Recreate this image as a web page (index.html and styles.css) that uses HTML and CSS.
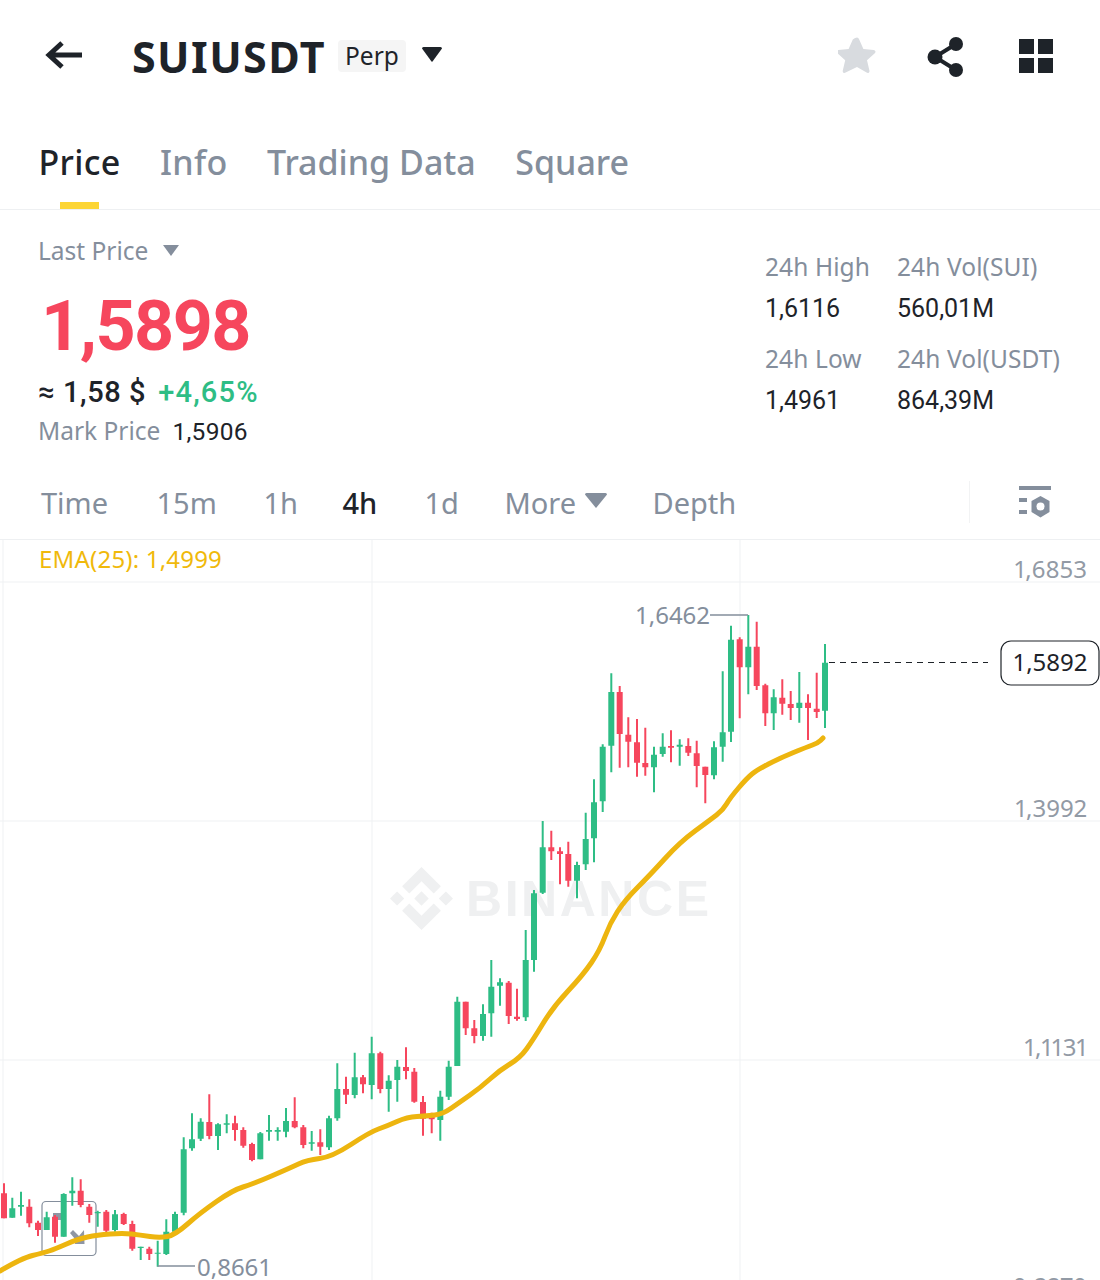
FILE: index.html
```html
<!DOCTYPE html>
<html lang="en">
<head>
<meta charset="utf-8">
<title>SUIUSDT Perp</title>
<link rel="stylesheet" href="styles.css">
</head>
<body>
<div class="page">
  <header class="topbar">
    <svg class="back" viewBox="0 0 38 30"><path d="M37 15H5M17 3 4 15l13 12" fill="none" stroke="#1e2329" stroke-width="5"/></svg>
    <h1 class="symbol">SUIUSDT</h1>
    <span class="perp">Perp</span>
    <svg class="caret-top" viewBox="0 0 20 15"><path d="M0 1.500Q0 0 1.500 0h17Q20 0 20 1.500L10.500 14.500Q10 15 9.500 14.500Z" fill="#1e2329"/></svg>
    <div class="top-actions">
      <svg class="star" viewBox="0 0 38 38"><path d="M19 1.500c1 0 1.700.8 2.200 1.900l4.200 9.600 10.200 1c2 .3 2.500 2 1.200 3.300l-7.800 7 2.400 10.300c.4 1.900-1.200 2.900-2.800 2L19 31l-11.400 5.600c-1.600.9-3.200-.1-2.800-2l2.400-10.300-7.800-7C-1.900 16-1.200 14.300.4 14l10.200-1 4.200-9.600C16.300 2.300 18 1.500 19 1.500Z" fill="#d8dbdf"/></svg>
      <svg class="share" viewBox="0 0 38 40"><path d="M29 7 8 20l21 13" fill="none" stroke="#1e2329" stroke-width="4"/><circle cx="29" cy="7" r="7" fill="#1e2329"/><circle cx="8" cy="20" r="7.500" fill="#1e2329"/><circle cx="29" cy="33" r="7" fill="#1e2329"/></svg>
      <svg class="grid-icon" viewBox="0 0 34 34"><path d="M0 0h15v15H0zM19 0h15v15H19zM0 19h15v15H0zM19 19h15v15H19z" fill="#1e2329"/></svg>
    </div>
  </header>

  <nav class="tabs">
    <a class="tab active">Price</a>
    <a class="tab tab-info">Info</a>
    <a class="tab">Trading Data</a>
    <a class="tab">Square</a>
  </nav>

  <section class="stats">
    <div class="last">
      <div class="last-label">Last Price<svg class="caret-small" viewBox="0 0 16 12"><path d="M0 0h16L8 11Z" fill="#848e9c"/></svg></div>
      <div class="last-value">1,5898</div>
      <div class="last-sub"><span class="approx">≈ 1,58 $</span><span class="change">+4,65%</span></div>
      <div class="mark"><span class="mark-label">Mark Price</span><span class="mark-value">1,5906</span></div>
    </div>
    <dl class="day-stats">
      <div class="stat"><dt>24h High</dt><dd>1,6116</dd></div>
      <div class="stat"><dt>24h Vol(SUI)</dt><dd>560,01M</dd></div>
      <div class="stat"><dt>24h Low</dt><dd>1,4961</dd></div>
      <div class="stat"><dt>24h Vol(USDT)</dt><dd>864,39M</dd></div>
    </dl>
  </section>

  <div class="intervals">
    <span class="int int-time">Time</span>
    <span class="int int-15">15m</span>
    <span class="int int-1h">1h</span>
    <span class="int int-4h">4h</span>
    <span class="int int-1d">1d</span>
    <span class="int int-more">More<svg class="caret-more" viewBox="0 0 22 15"><path d="M0 1.500Q0 0 1.500 0h19Q22 0 22 1.500L11.500 14.500Q11 15 10.500 14.500Z" fill="#848e9c"/></svg></span>
    <span class="int">Depth</span>
    <span class="int-sep"></span>
    <svg class="chart-settings" viewBox="0 0 32 32"><path d="M0 0h32v4H0zM0 12h8v4H0zM0 24h8v4H0z" fill="#848e9c"/><path d="M21.500 10l9 5v11l-9 5.500-9-5.500V15z" fill="#848e9c"/><circle cx="21.500" cy="20.500" r="4" fill="#fff"/></svg>
  </div>

  <div class="chart">
    <svg class="chart-svg" viewBox="0 540 1100 740">
      <g class="grid-lines">
        <path d="M3 540V1280M372 540V1280M740 540V1280M0 582H1100M0 821H1100M0 1060H1100"/>
      </g>
      <g class="watermark">
        <svg x="390" y="867" width="63" height="63" viewBox="0 0 126.610 126.610"><path d="M38.730 53.200l24.590-24.580 24.600 24.600 14.300-14.310L63.320 0 24.430 38.900l14.300 14.300zM0 63.310l14.300-14.310 14.310 14.310-14.310 14.300zM38.730 73.410l24.590 24.590 24.600-24.600 14.310 14.290-38.900 38.910-38.910-38.880-.02-.02zM98 63.310l14.300-14.310 14.310 14.300-14.310 14.320zM77.830 63.300L63.320 48.780 52.590 59.510l-1.240 1.230-2.540 2.540 14.510 14.500 14.510-14.470z"/></svg>
        <text x="466" y="916" class="wm-text" textLength="243">BINANCE</text>
      </g>
      <text class="ema-label" x="39" y="568">EMA(25): 1,4999</text>
      <g class="axis">
        <text x="1087" y="578">1,6853</text>
        <text x="1087" y="817">1,3992</text>
        <text x="1087" y="1056">1,1131</text>
        <text x="1087" y="1295">0,8270</text>
      </g>

      <rect class="mini-box" x="42" y="1201.500" width="54" height="54" rx="4"/>
      <path class="mini-icon" d="M53 1213h9v7h-4v5h-5zM70 1233l3-3 6 6 5-6 .5 14H75v-5z"/>

      <path class="up wick" d="M825 644V728M799.300 672V722.700M773.700 689.300V730M748.300 615V694.300M731 625.700V742M722.700 671.300V761.700M714 741.300V779.300M679.700 739.300V765.700M662.700 733.300V756.700M654 746.700V792.300M611.300 673.300V772.300M602.700 744.300V812M594 779.300V862.300M585.700 812.700V870M577 861.700V898.300M542.700 821V894M534 890V971.700M525.700 930V1021M500 978.300V1005.700M491.300 960V1036.700M483 1004.300V1040.700M457.300 996.700V1066M448.700 1060.700V1100M440.300 1090.700V1140.700M397.300 1060V1101.700M388.700 1075.300V1111.700M371.700 1036.700V1099.300M354.700 1052.700V1098.300M337.300 1063.300V1120.700M329 1115.700V1150M311.700 1131V1150.700M286 1108V1137.300M277.700 1127.300V1140.700M269 1115V1140.700M260.300 1132V1159.300M226.700 1114.300V1133.300M218 1123.300V1150M200.700 1118.300V1141M192 1113.300V1150.700M183.700 1137.300V1215.300M175 1211.700V1231.700M166.300 1219.300V1255M157.700 1240.700V1266.700M140.700 1246.700V1260M115 1210V1231.700M97.700 1210.700V1226.700M72.300 1177.300V1205.700M63.700 1193.300V1236.700M46.700 1211.700V1230M21 1191.700V1215.700M12.300 1197.700V1217.700"/>
      <path class="up body" d="M825 662.700V710.700M799.300 702.700V708M773.700 697.300V713.300M748.300 646.700V667.300M731 639.700V731.700M722.700 732.300V746.700M714 747.300V775.300M679.700 744.700V746.700M662.700 746.700V754M654 754.700V767.300M611.300 692V745.700M602.700 746.700V801.300M594 802.300V838.300M585.700 839V864.300M577 865V880.700M542.700 847.300V892.700M534 893.300V960M525.700 960V1017.300M500 982.300V985.700M491.300 986.700V1013.300M483 1014V1036M457.300 1001.700V1066M448.700 1066.700V1096.700M440.300 1096.700V1120M397.300 1066.700V1080M388.700 1080.700V1089M371.700 1053.300V1085M354.700 1077.300V1095M337.300 1089V1118.300M329 1118.300V1147.300M311.700 1142.300V1143.700M286 1121V1131.700M277.700 1130V1131.700M269 1130V1131.700M260.300 1133.300V1159.300M226.700 1123.300V1124.700M218 1124.300V1136M200.700 1121.700V1138.700M192 1139.300V1148.300M183.700 1149.300V1212.700M175 1214V1231.700M166.300 1231.700V1254M157.700 1252.700V1253.700M140.700 1246.700V1248M115 1214.300V1230M97.700 1212V1213.300M72.300 1190.700V1193.300M63.700 1194V1236.700M46.700 1217.300V1230M21 1205V1206.700M12.300 1208.300V1217.700"/>
      <path class="down wick" d="M816.700 672.700V718M808 694.300V740M790.700 691V720M782.300 679.300V714.700M765.300 683.700V726M756.700 621.700V690M739.700 637.300V718.300M705.300 766.700V803.300M696.700 740.700V787.300M688.300 738.300V756M671 730.300V762.300M645.300 727.700V775.700M637 719V776.700M628.300 717.300V767.300M619.700 686V767.700M568.300 841.700V886.700M560 847.300V884.300M551.300 830.700V860M517 988.700V1020.700M508.700 981V1024M474.300 1020V1043.300M465.700 1001.700V1035M431.700 1112.700V1133.300M423 1096V1135.700M414.300 1068V1102.700M406 1047.300V1079.300M380.300 1051.700V1093.300M363 1075V1093.300M346 1076.700V1104M320.300 1129.300V1155M303.300 1125V1148.300M294.700 1097.300V1128.300M252 1142.700V1161.300M243.300 1127.300V1147.700M235 1115.700V1140.700M209.300 1094.300V1139.300M149.300 1246.700V1260M132.300 1220.700V1250.700M123.700 1212.700V1225M106.300 1210V1232M89.300 1204V1222.700M80.700 1179.300V1207.300M55 1215V1242.700M38 1220.700V1236M29.300 1199.300V1227.300M4 1183.300V1218.300"/>
      <path class="down body" d="M816.700 708.700V712M808 702.700V708M790.700 704V708M782.300 697.700V703.700M765.300 685.300V713.300M756.700 646.700V686M739.700 639.300V667.300M705.300 766.700V775M696.700 753.300V766M688.300 746V752.700M671 746V747.700M645.300 763V767.300M637 742.300V762.700M628.300 734.700V741.700M619.700 692V734M568.300 854V880.700M560 851.300V854M551.300 847.300V851.300M517 1016.700V1019M508.700 982.700V1016M474.300 1028.300V1036M465.700 1001.700V1028.300M431.700 1115V1119.300M423 1102V1118.700M414.300 1071.700V1101.700M406 1067V1071M380.300 1053.300V1089M363 1077.300V1084.300M346 1089V1094.700M320.300 1142.300V1146.700M303.300 1127.300V1145M294.700 1121V1127.300M252 1144V1160M243.300 1130V1145.700M235 1123.300V1130M209.300 1122V1136M149.300 1248.700V1254M132.300 1224V1248.700M123.700 1214V1224M106.300 1211.700V1230.700M89.300 1206.700V1215M80.700 1190.700V1205M55 1216.700V1236.700M38 1222.700V1230M29.300 1206.700V1223.300M4 1193.300V1218.300"/>

      <path class="ema" d="M0 1271Q22 1258 32.500 1255.500Q43 1253 49 1251Q55 1249 66.500 1244Q78 1239 87.500 1237Q97 1235 110 1234Q123 1233 131.500 1234Q140 1235 150 1236.500Q160 1238 167.500 1236.500Q175 1235 187.500 1224Q200 1213 216.500 1201.500Q233 1190 243 1187Q253 1184 271.500 1176Q290 1168 298.500 1164Q307 1160 319.500 1158.500Q332 1157 351 1144.500Q370 1132 378.500 1129Q387 1126 397 1121.500Q407 1117 417 1116.500Q427 1116 435 1115Q443 1114 451.500 1108Q460 1102 470 1095Q480 1088 490 1079Q500 1070 510 1064Q520 1058 526.500 1049Q533 1040 543 1023.500Q553 1007 568 991Q583 975 591.500 962.500Q600 950 605 936.500Q610 923 617.500 911.500Q625 900 637.500 887.500Q650 875 665 858.500Q680 842 695 831Q710 820 716.500 815Q723 810 726.500 804Q730 798 738.500 788Q747 778 752 774Q757 770 768.500 764Q780 758 793.500 752.500Q807 747 812.500 745Q818 743 820.500 740.500L823 738"/>

      <path class="hl-line" d="M710 615H748M157.500 1266H195"/>
      <text class="hl-text" x="635" y="624">1,6462</text>
      <text class="hl-text" x="197" y="1276">0,8661</text>

      <path class="last-line" d="M829 662.500H988"/>
      <rect class="last-box" x="1001" y="641" width="98" height="44" rx="10"/>
      <text class="last-text" x="1050" y="671">1,5892</text>
    </svg>
  </div>
</div>
</body>
</html>
```
FILE: styles.css
```css
* { box-sizing: border-box; }
html, body { margin: 0; padding: 0; background: #fff; }
body { font-family: "Noto Sans", Roboto, sans-serif; color: #1e2329; }
.page { width: 1100px; height: 1280px; overflow: hidden; display: flex; flex-direction: column; }

.topbar { height: 110px; display: flex; align-items: center; padding: 2px 47px 0 45px; }
.back { width: 38px; height: 30px; flex: none; margin-top: -2px; }
.symbol { margin: 0 0 0 49px; font-family: "Noto Sans", sans-serif; font-size: 43px; font-weight: 700; line-height: 1; letter-spacing: 1.400px; }
.perp { margin-left: 12px; height: 32px; width: 68px; background: #f5f5f5; border-radius: 4px; font-size: 24.500px; line-height: 32px; text-align: center; }
.caret-top { width: 20px; height: 15px; margin-left: 16px; margin-top: -4px; }
.top-actions { margin-left: auto; display: flex; align-items: center; gap: 51px; }
.star { width: 38px; height: 38px; margin-top: -2px; }
.share { width: 38px; height: 40px; margin-right: 1px; margin-top: 2px; }
.grid-icon { width: 34px; height: 34px; margin-left: 2px; }

.tabs { height: 100px; display: flex; gap: 39.500px; padding: 31px 0 0 38.500px; border-bottom: 1px solid #eef0f2; }
.tab { position: relative; font-size: 34px; line-height: 42px; font-weight: 500; color: #848e9c; }
.tab-info { letter-spacing: .3px; }
.tab.active { color: #1e2329; letter-spacing: .3px; }
.tab.active::after { content: ""; position: absolute; left: 21px; bottom: 0; width: 39px; height: 7px; background: #fcd535; }

.stats { height: 255px; display: flex; justify-content: space-between; padding: 0 39px; }
.last { display: flex; flex-direction: column; }
.last-label { display: flex; align-items: center; margin-top: 24px; margin-left: -1px; font-size: 24.500px; line-height: 34px; color: #848e9c; }
.caret-small { width: 16px; height: 12px; margin-left: 15px; margin-top: -1px; }
.last-value { margin: 16px 0 0 2px; font-family: Roboto, sans-serif; font-size: 70px; font-weight: 700; line-height: 84px; color: #f6465d; letter-spacing: -1.500px; }
.last-sub { display: flex; align-items: center; gap: 12px; margin-top: 4px; margin-left: -1px; font-family: Roboto, sans-serif; font-size: 29px; line-height: 40px; font-weight: 500; }
.approx { letter-spacing: .6px; }
.change { color: #2ebd85; letter-spacing: 1.200px; }
.mark { display: flex; align-items: baseline; gap: 12px; margin-left: -1px; font-size: 24.500px; line-height: 38px; }
.mark-label { color: #848e9c; }
.mark-value { font-family: Roboto, sans-serif; letter-spacing: .3px; }

.day-stats { margin: 40px 0 0; display: grid; grid-template-columns: 132px 164px; grid-auto-rows: 92px; }
.stat { display: flex; flex-direction: column; gap: 8px; }
.stat dt { font-size: 24.500px; line-height: 34px; color: #848e9c; white-space: nowrap; letter-spacing: .1px; }
.stat dd { margin: 0; font-family: Roboto, sans-serif; font-size: 25px; line-height: 34px; white-space: nowrap; }

.intervals { height: 75px; display: flex; align-items: center; padding: 0 49px 0 41px; border-bottom: 1px solid #eef0f2; font-size: 29px; color: #848e9c; }
.int { display: flex; align-items: center; }
.int-time { width: 115.500px; }
.int-15 { width: 107px; }
.int-1h { width: 79px; }
.int-4h { width: 82px; color: #1e2329; font-weight: 500; }
.int-1d { width: 80px; }
.int-more { width: 148px; }
.caret-more { width: 22px; height: 15px; margin-left: 9px; margin-top: -3px; }
.int-sep { margin-left: auto; width: 1px; height: 42px; background: #f2f3f4; }
.chart-settings { width: 32px; height: 32px; margin-left: 49px; }

.chart { flex: 1; min-height: 0; }
.chart-svg { display: block; width: 1100px; height: 740px; }
.grid-lines path { fill: none; stroke: #eff1f3; stroke-width: 1; }
.watermark { fill: #eff0f1; }
.wm-text { font-family: "Liberation Sans", sans-serif; font-size: 50px; font-weight: 700; }
.ema-label { font-family: "Noto Sans", sans-serif; font-size: 24px; fill: #f0b90b; letter-spacing: .2px; }
.axis text { font-family: "Noto Sans", sans-serif; font-size: 24px; fill: #929aa5; text-anchor: end; font-variant-numeric: proportional-nums; }
.wick { fill: none; stroke-width: 2; }
.body { fill: none; stroke-width: 6; }
.up { stroke: #2ebd85; }
.down { stroke: #f6465d; }
.ema { fill: none; stroke: #edb50f; stroke-width: 5; stroke-linejoin: round; stroke-linecap: round; }
.hl-line { fill: none; stroke: #848e9c; stroke-width: 1.500; }
.hl-text { font-family: "Noto Sans", sans-serif; font-size: 24px; fill: #848e9c; }
.last-line { stroke: #1e2329; stroke-width: 1; stroke-dasharray: 6 5; }
.last-box { fill: #fff; stroke: #1e2329; stroke-width: 1.200; }
.last-text { font-family: "Noto Sans", sans-serif; font-size: 24px; fill: #1e2329; text-anchor: middle; }
.mini-box { fill: none; stroke: #848e9c; stroke-width: 1.200; }
.mini-icon { fill: #8f96a3; }
```
